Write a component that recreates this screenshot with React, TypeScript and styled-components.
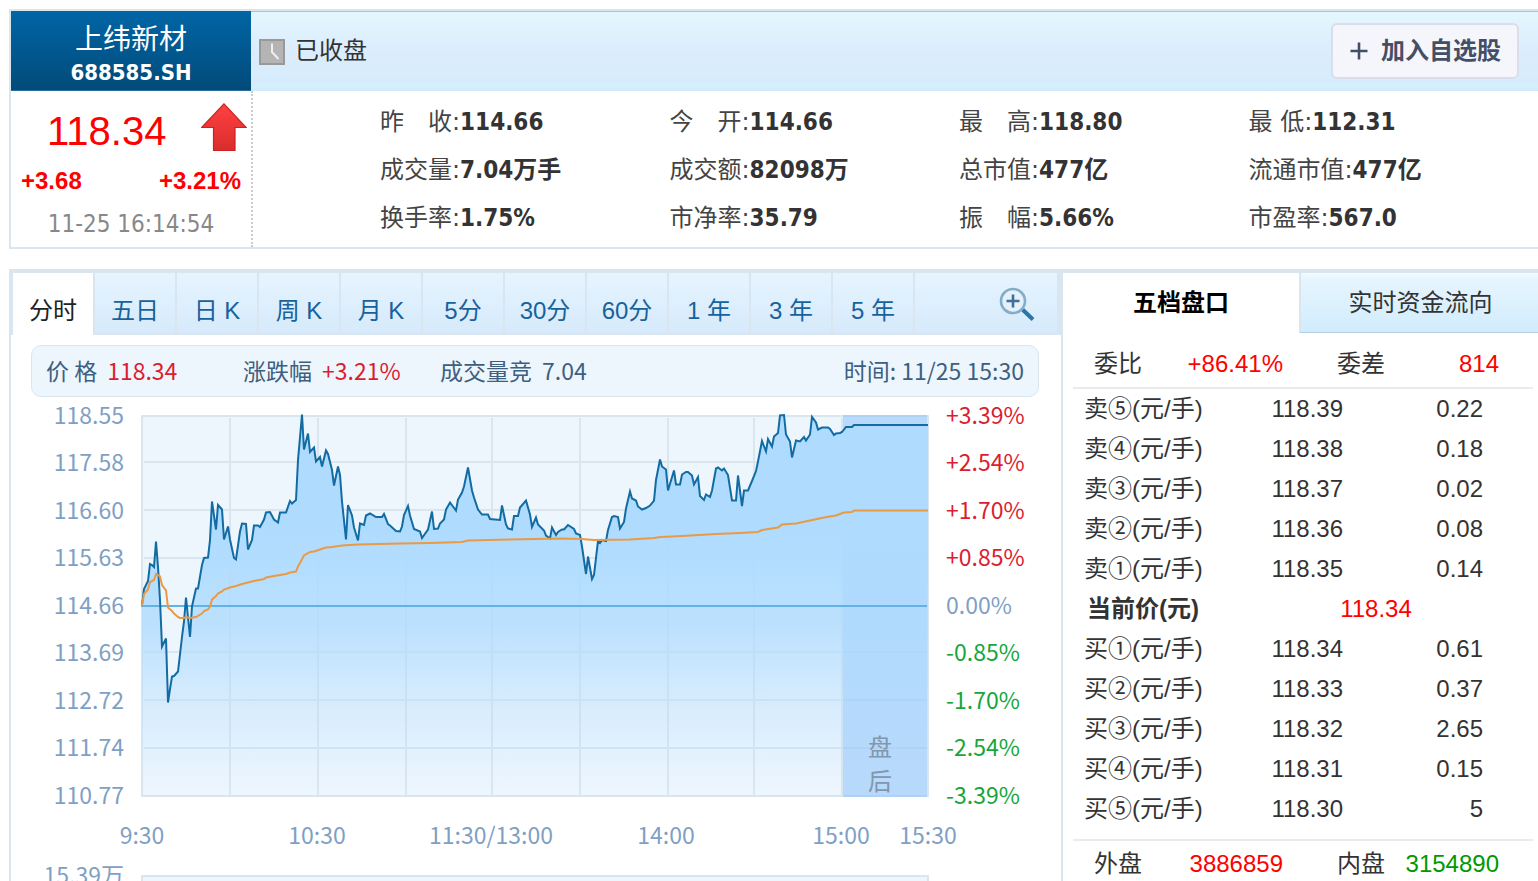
import React, { useState } from "react";
import styled, { createGlobalStyle } from "styled-components";

const LINE = "#dae6ef";
const ARIAL = `"Liberation Sans", "Noto Sans CJK SC", sans-serif`;
const TAHOMA = `"DejaVu Sans Condensed", "Noto Sans CJK SC", sans-serif`;
const VERDANA = `"DejaVu Sans", "Noto Sans CJK SC", sans-serif`;
const HAN = `"Noto Sans CJK SC", sans-serif`;

const GlobalStyle = createGlobalStyle`
  *, *::before, *::after { box-sizing: border-box; }
  body { margin: 0; background: #fff; color: #333; font: 24px/40px ${ARIAL}; }
  button { margin: 0; padding: 0; border: 0; background: none; font: inherit; color: inherit; cursor: pointer; }
  h1, p, dl, dt, dd { margin: 0; font: inherit; }
  svg { display: block; }
`;

const Page = styled.main`
  height: 100vh;
  overflow: hidden;
  padding: 9px 0 0 9px;
`;

/* ---------- quote header ---------- */

const Quote = styled.header`
  display: grid;
  grid-template-columns: 240px minmax(0, 1fr);
  border: 2px solid ${LINE};
  border-right: 0;
  margin-bottom: 20px;
`;

const Name = styled.div`
  height: 80px;
  padding-top: 10px;
  background: linear-gradient(#0165a5, #014b7a);
  border-bottom: 1px solid #2b6f9e;
  color: #fff;
  text-align: center;
`;

const StockName = styled.h1`
  font-size: 28px;
  line-height: 38px;
`;

const StockCode = styled.p`
  font: bold 22px/28px ${TAHOMA};
`;

const StatusBar = styled.div`
  display: flex;
  align-items: center;
  gap: 10px;
  height: 80px;
  padding: 0 19px 2px 8px;
  border-top: 1px solid #a9c4d8;
  background: linear-gradient(#e4f7fe, #dcedfd 45%, #d6ecfc 88%, #d4f1fe 94%, #cfeaf8);
`;

const AddButton = styled.button`
  display: flex;
  align-items: center;
  justify-content: center;
  gap: 12px;
  width: 188px;
  height: 56px;
  margin-left: auto;
  border: 2px solid #d9dee8;
  border-radius: 6px;
  background: #f5f6fb;
  color: #434f66;
  font-weight: bold;
`;

const PriceBox = styled.div`
  height: 156px;
  padding-top: 12px;
`;

const PriceRow = styled.div`
  display: flex;
  align-items: flex-start;
  justify-content: space-between;
  padding: 0 4px 0 36px;
  color: #f00;
  font-size: 40px;
  line-height: 56px;
`;

const ChangeRow = styled.div`
  display: flex;
  justify-content: space-between;
  padding: 0 10px;
  color: #f00;
  font-weight: bold;
  line-height: 44px;
`;

const Updated = styled.p`
  color: #888;
  text-align: center;
  font-family: ${TAHOMA};
  line-height: 42px;
`;

const Stats = styled.dl`
  display: grid;
  grid-template-columns: repeat(4, 1fr);
  grid-auto-rows: 48px;
  padding: 7px 0 0 127px;
  border-left: 2px dotted #ccc;
`;

const Stat = styled.div`
  display: flex;
  line-height: 48px;
  white-space: pre;
`;

const StatLabel = styled.dt`
  color: #444;
  font-family: ${VERDANA};
`;

const StatValue = styled.dd`
  font-family: ${TAHOMA};
  font-weight: bold;
`;

/* ---------- lower panels ---------- */

const Panels = styled.div`
  display: grid;
  grid-template-columns: minmax(0, 1fr) 477px;
  border-top: 4px solid ${LINE};
`;

const ChartPanel = styled.section`
  border-left: 2px solid ${LINE};
`;

const ChartTabs = styled.div`
  display: flex;
  height: 62px;
  border: solid ${LINE};
  border-width: 0 4px 2px 2px;
  background: linear-gradient(#e6f4ff, #d6eafb);
`;

const ChartTab = styled.button<{ $active: boolean }>`
  width: 82px;
  height: ${(p) => (p.$active ? 62 : 60)}px;
  padding-top: ${(p) => (p.$active ? 14 : 16)}px;
  border-right: 2px solid ${LINE};
  background: ${(p) => (p.$active ? "#fff" : "none")};
  color: ${(p) => (p.$active ? "#222" : "#17629b")};
`;

const ZoomButton = styled.button`
  margin-left: auto;
  padding: 4px 22px 0 0;
`;

const InfoBar = styled.div`
  display: flex;
  height: 52px;
  margin: 10px 22px 0 20px;
  padding: 0 14px;
  border: 1px solid ${LINE};
  border-radius: 10px;
  background: #eef6fd;
  color: #3d5f80;
  font: 23px/48px ${HAN};
  white-space: nowrap;
`;

const InfoItem = styled.span`
  flex: 0 0 197px;
  display: flex;
  gap: 10px;
`;

const InfoTime = styled.span`
  margin-left: auto;
`;

const Rise = styled.span`
  color: #dd1c30;
`;

const ChartSvg = styled.svg`
  width: 100%;
  font: 23px ${HAN};
`;

/* ---------- order book ---------- */

const BookPanel = styled.section`
  border-left: 2px solid ${LINE};
`;

const BookTabs = styled.div`
  display: grid;
  grid-template-columns: 236px minmax(0, 1fr);
  height: 60px;
`;

const BookTab = styled.button<{ $active: boolean }>`
  ${(p) =>
    p.$active
      ? "color: #000; font-weight: bold;"
      : `padding-left: 2px;
         border-left: 2px solid ${LINE};
         border-bottom: 1px solid #b5d0de;
         background: linear-gradient(#f2fbff, #e6f5fe 10%, #d1ecfd);`}
`;

const BookBody = styled.div`
  margin: 0 5px 0 10px;
`;

const Summary = styled.dl<{ $top?: boolean }>`
  display: grid;
  grid-template-columns: 7fr 6fr;
  column-gap: 54px;
  padding: ${(p) => (p.$top ? "8px 34px 0 21px" : "0 34px 0 21px")};
  line-height: 46px;
  border: solid #ebebeb;
  border-width: ${(p) => (p.$top ? "0 0 2px" : "2px 0 0")};
`;

const Pair = styled.div`
  display: flex;
  justify-content: space-between;
`;

const Amount = styled.dd<{ $down?: boolean }>`
  color: ${(p) => (p.$down ? "#090" : "#f00")};
`;

const Book = styled.table`
  width: 100%;
  margin-bottom: 10px;
  border-collapse: collapse;
  table-layout: fixed;
`;

const Level = styled.th<{ $current?: boolean }>`
  width: 146px;
  height: 40px;
  padding: 0 0 0 ${(p) => (p.$current ? 14 : 11)}px;
  text-align: left;
  font-weight: ${(p) => (p.$current ? "bold" : "normal")};
  white-space: nowrap;
`;

const Price = styled.td`
  width: 124px;
  padding: 0;
  text-align: right;
`;

const Volume = styled.td`
  padding: 0 50px 0 0;
  text-align: right;
`;

const Current = styled.td`
  padding: 0;
  text-align: center;
  color: #f00;
`;

/* ---------- data ---------- */

const stats: [string, string][] = [
  ["昨　收:", "114.66"],
  ["今　开:", "114.66"],
  ["最　高:", "118.80"],
  ["最 低:", "112.31"],
  ["成交量:", "7.04万手"],
  ["成交额:", "82098万"],
  ["总市值:", "477亿"],
  ["流通市值:", "477亿"],
  ["换手率:", "1.75%"],
  ["市净率:", "35.79"],
  ["振　幅:", "5.66%"],
  ["市盈率:", "567.0"],
];

const periods = ["分时", "五日", "日 K", "周 K", "月 K", "5分", "30分", "60分", "1 年", "3 年", "5 年"];

const asks = [
  ["卖⑤(元/手)", "118.39", "0.22"],
  ["卖④(元/手)", "118.38", "0.18"],
  ["卖③(元/手)", "118.37", "0.02"],
  ["卖②(元/手)", "118.36", "0.08"],
  ["卖①(元/手)", "118.35", "0.14"],
];

const bids = [
  ["买①(元/手)", "118.34", "0.61"],
  ["买②(元/手)", "118.33", "0.37"],
  ["买③(元/手)", "118.32", "2.65"],
  ["买④(元/手)", "118.31", "0.15"],
  ["买⑤(元/手)", "118.30", "5"],
];

const RED = "#dd1c30";
const GREEN = "#16a63c";
const BLUE = "#7f9fc5";

const levels: [number, string, string, string][] = [
  [416, "118.55", "+3.39%", RED],
  [463, "117.58", "+2.54%", RED],
  [511, "116.60", "+1.70%", RED],
  [558, "115.63", "+0.85%", RED],
  [606, "114.66", "0.00%", BLUE],
  [653, "113.69", "-0.85%", GREEN],
  [701, "112.72", "-1.70%", GREEN],
  [748, "111.74", "-2.54%", GREEN],
  [796, "110.77", "-3.39%", GREEN],
];

const times: [number, string][] = [
  [142, "9:30"],
  [317, "10:30"],
  [491, "11:30/13:00"],
  [666, "14:00"],
  [841, "15:00"],
  [928, "15:30"],
];

const pricePath =
  "142,605 144,589 148,581 150,564 152,565 154,567 156,541.5 158,567 160,600 162,646.5 166,638.5 168,702.5 170,689 172,676.5 174,676 178,671.5 182,637 184,621.5 186,597.5 190,637 192,606.5 196,588.5 198,588.5 202,565 204,558 208,557.5 210,540 212,501.5 216,529.5 218,505 222,509.5 224,539.5 228,526.5 230,539.5 234,558 236,559.5 240,531.5 242,523.5 246,524 248,549.5 252,540 254,525.5 258,525.5 260,527 264,519.5 266,512.5 270,512 274,519.5 278,522.5 280,512.5 286,512.5 290,501 292,503.5 296,500 298,460 302,414.5 304,449.5 308,433.5 310,452 314,447.5 316,461.5 320,457 322,466.5 326,450.5 328,454 332,470 334,485.5 338,466.5 340,475 342,501.5 346,539.5 348,505 352,515.5 354,527.5 358,540.5 360,523.5 364,525 366,515.5 370,513.5 376,517 382,517 384,514 388,524 390,525.5 396,531 400,531.5 402,526.5 404,515 408,506 410,515.5 414,529 420,531.5 422,538 428,529.5 432,511.5 434,529 438,528.5 440,523.5 444,519.5 446,509.5 450,502.5 456,510.5 458,499.5 462,492.5 464,486.5 468,467.5 472,490.5 474,497.5 478,509.5 482,514.5 488,514.5 490,519 500,520 502,505.5 506,524.5 508,528.5 512,529.5 514,516 518,516 520,507.5 526,500.5 530,514.5 532,527 536,517.5 538,524.5 544,530.5 546,535.5 550,538.5 552,527.5 556,535 558,532 562,529.5 564,529.5 568,525 574,529 576,533.5 580,535 582,546.5 586,574 588,556.5 592,579 594,575 598,541 600,543 602,540 606,541 608,530 612,517 614,516 618,517 620,528.5 624,522 626,508.5 630,491.5 632,498.5 636,500.5 638,506.5 642,509.5 646,508 650,505.5 654,500.5 656,480 660,459.5 662,466.5 666,469.5 668,490.5 674,470.5 676,484.5 680,484.5 682,474.5 686,472 688,472 692,475.5 694,484.5 698,477 700,496 704,500 706,494.5 710,497 712,490.5 716,468.5 718,467.5 722,470.5 724,468.5 728,475 732,500.5 736,500.5 738,475.5 742,506 744,490.5 748,490.5 752,481 756,471 758,461.5 762,441 766,451.5 768,439 772,446.5 774,436.5 778,433 780,415.5 784,415 786,434.5 790,441.5 792,457.5 796,440.5 800,441.5 804,437 806,440.5 810,434.5 812,417 816,422.5 818,429.5 822,427.5 828,427.5 830,429 834,435 836,433.5 840,433 842,432 846,427 852,427 854,425 928,425";

const averagePath =
  "142,605 144,594 148,589.5 150,582 154,580 156,574 160,576.5 162,585 166,590.5 168,607.5 172,611 174,613.5 178,617 180,618 184,618 186,617 190,618 196,617 202,613.5 204,611 208,609.5 210,606.5 212,599.5 216,596 218,593.5 222,591.5 224,589.5 230,587.5 236,586 242,584 254,581 264,579 266,577.5 274,576 286,574 290,572.5 296,571.5 298,566.5 300,563 304,555.5 310,552 314,551.5 320,549.5 326,547.5 332,547 342,545.5 358,544.5 400,543.5 430,543 462,542 468,540.5 510,539.5 560,538.5 582,539 594,540 630,539.5 654,538 660,537 682,536 716,534 740,533 758,532 762,530 778,527.5 782,524.5 796,523.5 810,520.5 824,517.5 836,515.5 844,512.5 852,512 854,510.5 928,510.5";

const ClockIcon = () => (
  <svg width="26" height="28" viewBox="0 -2 26 28" aria-hidden="true">
    <rect x="1" y="1" width="24" height="24" fill="#b4b4b4" stroke="#999" strokeWidth="2" />
    <path d="M13 4.500V13l6.500 7" fill="none" stroke="#efefef" strokeWidth="2" />
  </svg>
);

const UpArrow = () => (
  <svg width="46" height="48" viewBox="0 0 46 48" role="img" aria-label="上涨">
    <defs>
      <linearGradient id="rise" x1="0" y1="0" x2="0" y2="1">
        <stop offset="0" stopColor="#ff4141" />
        <stop offset="1" stopColor="#d92d2d" />
      </linearGradient>
    </defs>
    <path d="M23 0.800L45.200 24.500H34V47.500H12.500V24.500H0.500Z" fill="url(#rise)" stroke="#cb2222" strokeWidth="1.200" />
  </svg>
);

const PlusIcon = () => (
  <svg width="20" height="20" viewBox="0 0 20 20" aria-hidden="true">
    <path d="M10 1.500V18.500M1.500 10H18.500" stroke="#434f66" strokeWidth="2.600" />
  </svg>
);

const MagnifierIcon = () => (
  <svg width="36" height="36" viewBox="0 0 36 36" aria-hidden="true">
    <path d="M23.500 22.500L34 32.500" stroke="#2a75a6" strokeWidth="4" />
    <circle cx="14" cy="14" r="12" fill="#e4f1fb" stroke="#83adc9" strokeWidth="2.600" />
    <path d="M14 7.500V20.500M7.500 14H20.500" stroke="#3f6f97" strokeWidth="2.600" />
  </svg>
);

const gridX = [230, 318, 406, 492, 580, 668, 754, 842];
const gridY = [462, 510, 558, 652, 700, 748];

const IntradayChart = () => (
  <ChartSvg viewBox="11 397 1050 564" role="img" aria-label="分时走势">
    <defs>
      <linearGradient id="area" gradientUnits="userSpaceOnUse" x1="0" y1="416" x2="0" y2="796">
        <stop offset="0.28" stopColor="#aedbfe" />
        <stop offset="0.54" stopColor="#aedbfe" stopOpacity="0.8" />
        <stop offset="0.75" stopColor="#aedbfe" stopOpacity="0.38" />
        <stop offset="1" stopColor="#aedbfe" stopOpacity="0" />
      </linearGradient>
    </defs>
    <rect x="142" y="416" width="786" height="380" fill="#eef6fd" />
    <g stroke={LINE} strokeWidth="2">
      {gridX.map((x) => (
        <line key={x} x1={x} x2={x} y1="418" y2="796" />
      ))}
      {gridY.map((y) => (
        <line key={y} x1="144" x2="928" y1={y} y2={y} />
      ))}
      <rect x="142" y="416" width="786" height="380" fill="none" strokeLinejoin="round" />
    </g>
    <rect x="843" y="415" width="84" height="382" fill="#82bbfa" fillOpacity="0.5" />
    <polygon points={`142,796 ${pricePath} 928,796`} fill="url(#area)" />
    <line x1="141" x2="927" y1="606" y2="606" stroke="#62b2e6" strokeWidth="2" />
    <polyline points={pricePath} fill="none" stroke="#126ca3" strokeWidth="2" />
    <polyline points={averagePath} fill="none" stroke="#e89a45" strokeWidth="2" />
    {levels.map(([y, price, percent, color]) => (
      <React.Fragment key={price}>
        <text x="124" y={y + 8} textAnchor="end" fill={BLUE}>{price}</text>
        <text x="946" y={y + 8} fill={color}>{percent}</text>
      </React.Fragment>
    ))}
    {times.map(([x, label]) => (
      <text key={label} x={x} y="844" textAnchor="middle" fill={BLUE}>{label}</text>
    ))}
    <g fill="#8296ae" fontSize="24" textAnchor="middle">
      <text x="880" y="756">盘</text>
      <text x="880" y="790">后</text>
    </g>
    <text x="124" y="884" textAnchor="end" fill={BLUE}>15.39万</text>
    <rect x="142" y="876" width="786" height="80" fill="#eef6fd" stroke={LINE} strokeWidth="2" strokeLinejoin="round" />
  </ChartSvg>
);

const BookRow = ({ row: [label, price, volume] }: { row: string[] }) => (
  <tr>
    <Level scope="row">{label}</Level>
    <Price>{price}</Price>
    <Volume>{volume}</Volume>
  </tr>
);

export default function App() {
  const [period, setPeriod] = useState(periods[0]);
  const [bookTab, setBookTab] = useState("五档盘口");

  return (
    <Page>
      <GlobalStyle />
      <Quote>
        <Name>
          <StockName>上纬新材</StockName>
          <StockCode>688585.SH</StockCode>
        </Name>
        <StatusBar>
          <ClockIcon />
          <span>已收盘</span>
          <AddButton type="button">
            <PlusIcon />
            加入自选股
          </AddButton>
        </StatusBar>
        <PriceBox>
          <PriceRow>
            <span>118.34</span>
            <UpArrow />
          </PriceRow>
          <ChangeRow>
            <span>+3.68</span>
            <span>+3.21%</span>
          </ChangeRow>
          <Updated>11-25 16:14:54</Updated>
        </PriceBox>
        <Stats>
          {stats.map(([label, value]) => (
            <Stat key={label}>
              <StatLabel>{label}</StatLabel>
              <StatValue>{value}</StatValue>
            </Stat>
          ))}
        </Stats>
      </Quote>

      <Panels>
        <ChartPanel>
          <ChartTabs role="tablist">
            {periods.map((p) => (
              <ChartTab
                key={p}
                type="button"
                role="tab"
                aria-selected={p === period}
                $active={p === period}
                onClick={() => setPeriod(p)}
              >
                {p}
              </ChartTab>
            ))}
            <ZoomButton type="button" aria-label="放大">
              <MagnifierIcon />
            </ZoomButton>
          </ChartTabs>
          <InfoBar>
            <InfoItem>
              价 格 <Rise>118.34</Rise>
            </InfoItem>
            <InfoItem>
              涨跌幅 <Rise>+3.21%</Rise>
            </InfoItem>
            <InfoItem>
              成交量竞 <span>7.04</span>
            </InfoItem>
            <InfoTime>时间: 11/25 15:30</InfoTime>
          </InfoBar>
          <IntradayChart />
        </ChartPanel>

        <BookPanel>
          <BookTabs role="tablist">
            {["五档盘口", "实时资金流向"].map((t) => (
              <BookTab
                key={t}
                type="button"
                role="tab"
                aria-selected={t === bookTab}
                $active={t === bookTab}
                onClick={() => setBookTab(t)}
              >
                {t}
              </BookTab>
            ))}
          </BookTabs>
          <BookBody>
            <Summary $top>
              <Pair>
                <dt>委比</dt>
                <Amount>+86.41%</Amount>
              </Pair>
              <Pair>
                <dt>委差</dt>
                <Amount>814</Amount>
              </Pair>
            </Summary>
            <Book>
              <tbody>
                {asks.map((row) => (
                  <BookRow key={row[0]} row={row} />
                ))}
                <tr>
                  <Level scope="row" $current>当前价(元)</Level>
                  <Current colSpan={2}>118.34</Current>
                </tr>
                {bids.map((row) => (
                  <BookRow key={row[0]} row={row} />
                ))}
              </tbody>
            </Book>
            <Summary>
              <Pair>
                <dt>外盘</dt>
                <Amount>3886859</Amount>
              </Pair>
              <Pair>
                <dt>内盘</dt>
                <Amount $down>3154890</Amount>
              </Pair>
            </Summary>
          </BookBody>
        </BookPanel>
      </Panels>
    </Page>
  );
}
